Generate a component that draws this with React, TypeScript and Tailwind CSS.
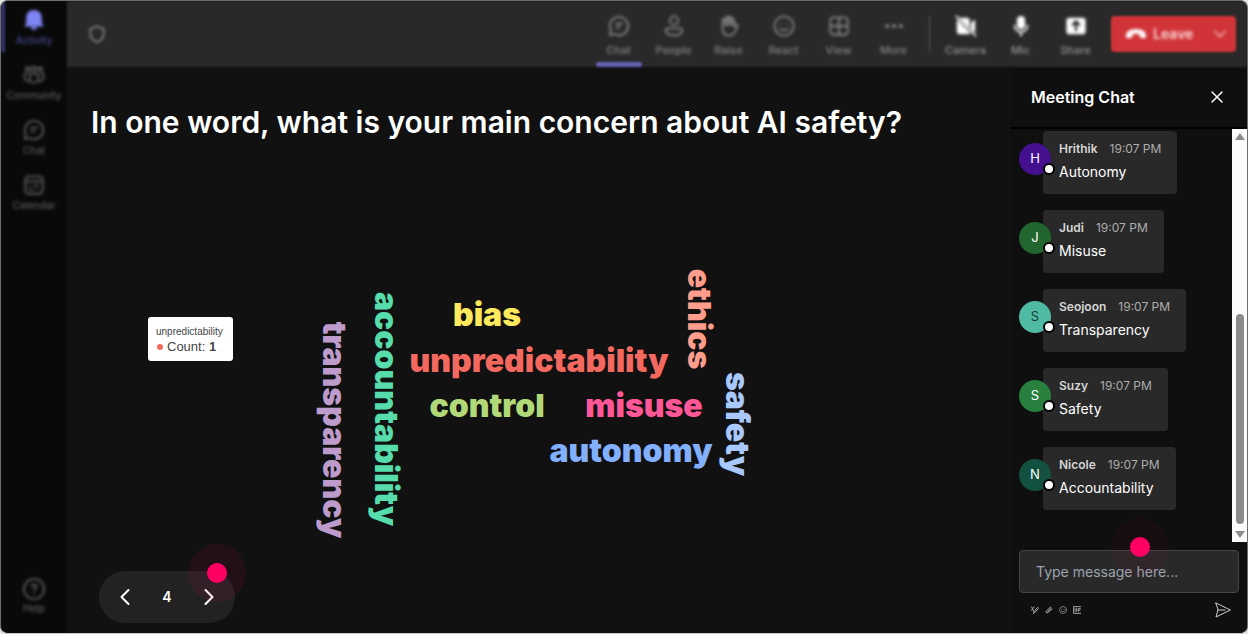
import type { ReactNode } from "react";
import clsx from "clsx";
import { ChevronLeft, ChevronRight, ChevronDown, X } from "lucide-react";

type IconProps = { className?: string };

function Svg({ className, children }: IconProps & { children: ReactNode }) {
  return (
    <svg
      viewBox="0 0 24 24"
      className={className}
      fill="none"
      stroke="currentColor"
      strokeWidth="2"
      strokeLinecap="round"
      strokeLinejoin="round"
      aria-hidden="true"
    >
      {children}
    </svg>
  );
}

const BellIcon = (props: IconProps) => (
  <Svg {...props}>
    <path d="M12 1c-5 0-8.500 3.500-8.500 8.500V15L1.500 19h21l-2-4V9.500C20.500 4.500 17 1 12 1Z" fill="currentColor" stroke="none" />
    <path d="M8.500 19.500h7c-.4 2-1.800 3.200-3.500 3.200s-3.100-1.200-3.500-3.200Z" fill="currentColor" stroke="none" />
  </Svg>
);

const CommunityIcon = (props: IconProps) => (
  <Svg {...props}>
    <circle cx="5" cy="5.500" r="2" />
    <circle cx="12" cy="5" r="2.500" />
    <circle cx="19" cy="5.500" r="2" />
    <path d="M7.500 10.500h9V16a4.500 4.500 0 0 1-9 0ZM4.500 10.500H1.800V15c0 2.500 2 4 4.200 3.800M19.500 10.500h2.700V15c0 2.500-2 4-4.200 3.800" />
  </Svg>
);

const ChatIcon = (props: IconProps) => (
  <Svg {...props}>
    <path d="M12 2a10 10 0 1 1-4.700 18.800L2 22l1.200-5.300A10 10 0 0 1 12 2Z" />
    <path d="M9 9.500h6.500M9 13.500h3.500" />
  </Svg>
);

const CalendarIcon = (props: IconProps) => (
  <Svg {...props}>
    <rect x="2.500" y="2.500" width="19" height="19" rx="3.500" />
    <path d="M3 8h18M7 13h.1M12 12.500h4M7 17h4M16 16.500h.1" />
  </Svg>
);

const HelpIcon = (props: IconProps) => (
  <Svg {...props}>
    <circle cx="12" cy="12" r="11" />
    <path d="M9.500 9.500c0-3.500 5.300-3 5.300 0 0 2-2.800 2-2.800 4.500M12 17.300v.1" />
  </Svg>
);

const ShieldIcon = (props: IconProps) => (
  <Svg {...props}>
    <path d="M12 2.500c2.500 2 5 2.800 8 3V12c0 4.500-3 7.800-8 9.800-5-2-8-5.300-8-9.800V5.500c3-.2 5.500-1 8-3Z" />
  </Svg>
);

const PeopleIcon = (props: IconProps) => (
  <Svg {...props}>
    <circle cx="12" cy="6" r="4.500" />
    <path d="M5.500 14.500h13a2.500 2.500 0 0 1 2.500 2.500c0 3.500-4 5.300-9 5.300S3 20.500 3 17a2.500 2.500 0 0 1 2.500-2.500Z" />
  </Svg>
);

const HandIcon = (props: IconProps) => (
  <Svg {...props}>
    <path d="M5 12V6a1.600 1.600 0 0 1 3.200 0V3.800a1.600 1.600 0 0 1 3.200 0v-.6a1.600 1.600 0 0 1 3.200 0V5a1.600 1.600 0 0 1 3 0v7.500l1-1.500c1-1.300 3.200-.5 2.700 1.200-1.600 4.500-3.800 10.300-9 10.300C7.500 22.500 5 19.500 5 15Z" />
    <path d="M8.200 5v6M11.400 4v7M14.600 5v6" strokeWidth="2.500" />
  </Svg>
);

const SmileIcon = (props: IconProps) => (
  <Svg {...props}>
    <circle cx="12" cy="12" r="10.500" />
    <path d="M8.500 9.500v.1M15.500 9.500v.1M7.500 15c2 2.600 7 2.600 9 0" />
  </Svg>
);

const ViewIcon = (props: IconProps) => (
  <Svg {...props}>
    <rect x="2.500" y="2.500" width="19" height="19" rx="3.500" />
    <path d="M12 3v18M3 12h18" />
  </Svg>
);

const MoreIcon = (props: IconProps) => (
  <Svg {...props}>
    <path d="M4.500 12h.1M12 12h.1M19.500 12h.1" strokeWidth="4.500" />
  </Svg>
);

const CameraOffIcon = (props: IconProps) => (
  <Svg {...props}>
    <path d="M5 3h8a3 3 0 0 1 3 3v8.500L5 3ZM2 4.500 17 19.800c-.7.800-1.600 1.200-2.700 1.200H5a3 3 0 0 1-3-3ZM17.500 8.500 22 5v14l-4.500-3.500Z" fill="currentColor" stroke="none" />
    <path d="m1.500 1.500 21 21" />
  </Svg>
);

const MicIcon = (props: IconProps) => (
  <Svg {...props}>
    <rect x="7.500" y="1" width="9" height="14.500" rx="4.500" fill="currentColor" stroke="none" />
    <path d="M5 11.500a7 7 0 0 0 14 0M12 18.500v4" />
  </Svg>
);

const ShareIcon = (props: IconProps) => (
  <Svg {...props}>
    <rect x="1.500" y="3" width="21" height="18" rx="3" fill="currentColor" stroke="none" />
    <path d="M12 16.500v-9M8.500 10.500 12 7l3.500 3.500" stroke="#292929" strokeWidth="2.500" />
  </Svg>
);

const HangUpIcon = (props: IconProps) => (
  <Svg {...props}>
    <path d="M12 6.500c6.500 0 11 3 11 7.300 0 1.800-.8 3.200-2.500 2.900l-3-.6c-1-.2-1.600-.9-1.700-1.900l-.2-2c-2.300-.7-4.900-.7-7.200 0l-.2 2c-.1 1-.7 1.700-1.700 1.900l-3 .6C1.800 17 1 15.600 1 13.800c0-4.300 4.500-7.300 11-7.300Z" fill="currentColor" stroke="none" />
  </Svg>
);

const SendIcon = (props: IconProps) => (
  <Svg {...props}>
    <path d="M1.500 1.500 23 12 1.500 22.500 4.500 12ZM4.500 12H15" strokeWidth="1.500" />
  </Svg>
);

const FormatIcon = (props: IconProps) => (
  <Svg {...props}>
    <path d="M2 3l6 13M1 13l8-10M8 22l1-5L20 4l3 3-12 13Z" strokeWidth="3" />
  </Svg>
);

const ClipIcon = (props: IconProps) => (
  <Svg {...props}>
    <path d="m8 17 10-10c2-2-1-4.500-3-2.500L4 15c-3 3.500 1 7.500 4.500 4.500L21 9" strokeWidth="3" />
  </Svg>
);

const GifIcon = (props: IconProps) => (
  <Svg {...props}>
    <path d="M23 2H1v20h22M6 8v8M11 8v8M16 16V8h6M16 12h5" strokeWidth="3" />
  </Svg>
);

const sideItems = [
  { label: "Activity", icon: BellIcon, active: true },
  { label: "Community", icon: CommunityIcon },
  { label: "Chat", icon: ChatIcon },
  { label: "Calendar", icon: CalendarIcon },
];

const toolbarItems = [
  { label: "Chat", icon: ChatIcon, active: true },
  { label: "People", icon: PeopleIcon },
  { label: "Raise", icon: HandIcon },
  { label: "React", icon: SmileIcon },
  { label: "View", icon: ViewIcon },
  { label: "More", icon: MoreIcon },
];

const deviceItems = [
  { label: "Camera", icon: CameraOffIcon },
  { label: "Mic", icon: MicIcon },
  { label: "Share", icon: ShareIcon },
];

// x / y is the middle of the word's baseline
const words = [
  { text: "bias", x: 420, y: 183, fill: "#ffe95c" },
  { text: "unpredictability", x: 472, y: 229, fill: "#f4695f" },
  { text: "control", x: 420, y: 274, fill: "#b2d977" },
  { text: "misuse", x: 577, y: 274, fill: "#ff5797" },
  { text: "autonomy", x: 564, y: 319, fill: "#82b0ff" },
  { text: "transparency", x: 256, y: 287, fill: "#bd9bcb", vertical: true },
  { text: "accountability", x: 308, y: 266, fill: "#57dcab", vertical: true },
  { text: "ethics", x: 621, y: 176, fill: "#ff9d8c", vertical: true },
  { text: "safety", x: 659, y: 281, fill: "#a9c8fb", vertical: true },
];

const messages = [
  { name: "Hrithik", text: "Autonomy", avatar: "bg-[#44108f] text-white" },
  { name: "Judi", text: "Misuse", avatar: "bg-[#22652f] text-white" },
  { name: "Seojoon", text: "Transparency", avatar: "bg-[#4fbba4] text-[#1c3b35]" },
  { name: "Suzy", text: "Safety", avatar: "bg-[#28803f] text-white" },
  { name: "Nicole", text: "Accountability", avatar: "bg-[#12513f] text-white" },
];

function Hotspot({ className, halo }: { className: string; halo: string }) {
  return (
    <span className={clsx("pointer-events-none absolute flex size-[58px] items-center justify-center rounded-full", halo, className)}>
      <span className="size-5 rounded-full bg-[#ff0062]" />
    </span>
  );
}

function Sidebar() {
  return (
    <nav className="flex w-[66px] shrink-0 flex-col bg-[#090909] text-[#5c5c5c] blur-[1px]">
      {sideItems.map(({ label, icon: Icon, active }) => (
        <button key={label} className="relative h-[55px] w-full">
          {active && <span className="absolute top-0 left-0 h-[51px] w-1 bg-[#35356b]" />}
          <span className="flex flex-col items-center gap-px blur-[1px]">
            <Icon className={clsx("size-[22px]", active && "text-[#7f85f5]")} />
            <span className={clsx("text-[10px] leading-4 font-medium", active && "text-[#474a92]")}>{label}</span>
          </span>
        </button>
      ))}
      <button className="mt-auto flex flex-col items-center pb-[17px] blur-[1px]">
        <HelpIcon className="size-[22px]" />
        <span className="text-[10px] leading-4 font-medium">Help</span>
      </button>
    </nav>
  );
}

function Toolbar() {
  return (
    <header className="flex h-[66px] shrink-0 items-center bg-[#292929] pr-[11px] pl-5 blur-[1px]">
      <ShieldIcon className="size-5 text-[#8a8a8a] blur-[1px]" />
      <div className="ml-auto flex h-full items-stretch text-[#858585]">
        {toolbarItems.map(({ label, icon: Icon, active }) => (
          <button key={label} className="relative flex w-[55px] flex-col items-center gap-[5px] pt-3.5">
            <Icon className="size-[22px] blur-[1px]" />
            <span className="text-[11px] leading-4 font-medium blur-[1px]">{label}</span>
            {active && <span className="absolute bottom-0 h-[5px] w-[46px] rounded-sm bg-[#6163b0]" />}
          </button>
        ))}
      </div>
      <div className="mx-2 h-9 w-px bg-[#555555]" />
      <div className="flex h-full items-stretch">
        {deviceItems.map(({ label, icon: Icon }) => (
          <button key={label} className="flex w-[55px] flex-col items-center gap-[5px] pt-3.5 text-[#969696]">
            <Icon className="size-[22px] text-white blur-[1px]" />
            <span className="text-[11px] leading-4 font-medium blur-[1px]">{label}</span>
          </button>
        ))}
      </div>
      <button className="ml-2 flex h-9 w-[125px] items-center rounded-sm bg-[#d13438] pl-3.5">
        <HangUpIcon className="size-[22px] text-white blur-[1px]" />
        <span className="ml-1.5 text-sm font-semibold text-[#fbdada] blur-[1px]">Leave</span>
        <ChevronDown className="mr-1.5 ml-auto size-5 text-[#f7b9ba] blur-[1px]" />
      </button>
    </header>
  );
}

function WordCloud() {
  return (
    <div className="relative min-h-0 flex-1">
      <svg className="size-full overflow-visible font-['Inter',sans-serif] text-[32px] font-black" role="img" aria-label="Word cloud of answers">
        {words.map(({ text, x, y, fill, vertical }) => (
          <text key={text} fill={fill} textAnchor="middle" transform={`translate(${x} ${y})${vertical ? " rotate(90)" : ""}`}>
            {text}
          </text>
        ))}
      </svg>
      <div className="absolute top-[174px] left-[81px] rounded-[3px] bg-white py-[7px] pr-2.5 pl-2 font-['Liberation_Sans',Arial,sans-serif] text-[#444444]">
        <p className="text-[10px] leading-4">unpredictability</p>
        <p className="flex items-center text-[13px] leading-[14px]">
          <span className="mr-1 ml-px size-1.5 rounded-full bg-[#f4695f]" />
          Count:&nbsp;<b>1</b>
        </p>
      </div>
    </div>
  );
}

function Pager() {
  return (
    <div className="relative mb-2.5 ml-8 flex h-[52px] w-[136px] items-center justify-between rounded-full bg-[#222222] px-3 text-white">
      <button aria-label="Previous question">
        <ChevronLeft className="size-7" strokeWidth={1.75} />
      </button>
      <span className="text-sm font-semibold">4</span>
      <button aria-label="Next question">
        <ChevronRight className="size-7" strokeWidth={1.75} />
      </button>
      <Hotspot className="-top-[27px] left-[89px]" halo="bg-[#ff0062]/8" />
    </div>
  );
}

function MeetingChat() {
  return (
    <aside className="flex w-[236px] shrink-0 flex-col bg-[#0f0f0f]">
      <div className="flex h-[62px] shrink-0 items-center justify-between border-b-2 border-black px-5">
        <h2 className="text-base font-semibold text-white">Meeting Chat</h2>
        <button aria-label="Close chat">
          <X className="size-5 text-white" strokeWidth={1.75} />
        </button>
      </div>

      <div className="flex min-h-0 flex-1">
        <ul className="flex min-w-0 flex-1 flex-col gap-4 overflow-hidden pt-0.5 pl-2">
          {messages.map(({ name, text, avatar }) => (
            <li key={name} className="flex shrink-0 items-start">
              <div className={clsx("relative z-10 mt-3 -mr-2 flex size-8 shrink-0 items-center justify-center rounded-full text-[13px]", avatar)}>
                {name[0]}
                <span className="absolute -right-1 bottom-0 size-3 rounded-full border-2 border-black bg-white" />
              </div>
              <div className="h-[63px] rounded-sm bg-[#292929] px-4 pt-2">
                <p className="flex gap-3 text-xs leading-5">
                  <span className="font-semibold text-[#d6d6d6]">{name}</span>
                  <time className="text-[#adadad]">19:07 PM</time>
                </p>
                <p className="text-sm leading-[26px] text-white">{text}</p>
              </div>
            </li>
          ))}
        </ul>
        {/* Scrollbar */}
        <div className="flex w-[15px] shrink-0 flex-col items-center bg-[#fcfcfc] py-1" aria-hidden="true">
          <svg viewBox="0 0 10 8" className="h-2 w-2.5 shrink-0 fill-[#8b8b8b]"><path d="M5 0 10 7H0Z" /></svg>
          <div className="mt-auto mb-1.5 h-[210px] w-2 rounded-full bg-[#8b8b8b]" />
          <svg viewBox="0 0 10 8" className="h-2 w-2.5 shrink-0 fill-[#8b8b8b]"><path d="M5 8 0 1h10Z" /></svg>
        </div>
      </div>

      <div className="relative shrink-0 px-2 pt-2">
        <input
          type="text"
          aria-label="Message"
          placeholder="Type message here..."
          className="block h-[43px] w-full rounded-sm border border-[#454545] bg-[#292929] px-4 text-sm text-white placeholder:text-[#9ca3af]"
        />
        <div className="flex h-10 items-center gap-1.5 px-3 pb-1.5 text-[#a8a8a8]">
          <button aria-label="Format"><FormatIcon className="size-2" /></button>
          <button aria-label="Attach"><ClipIcon className="size-2" /></button>
          <button aria-label="Emoji"><SmileIcon className="size-2" /></button>
          <button aria-label="GIF"><GifIcon className="size-2" /></button>
          <button aria-label="Send" className="-mr-1 ml-auto"><SendIcon className="size-4 text-[#d0d0d0]" /></button>
        </div>
        <Hotspot className="-top-6 left-[100px]" halo="bg-[#ff0062]/4" />
      </div>
    </aside>
  );
}

export default function App() {
  return (
    <div className="h-screen bg-[#e4e4e4] font-['Inter',sans-serif]">
      <div className="flex h-full overflow-hidden rounded-lg border border-[#6e6e6e] border-b-[#c8c8c8] bg-[#111111]">
        <Sidebar />
        <div className="flex min-w-0 flex-1 flex-col">
          <Toolbar />
          <div className="flex min-h-0 flex-1">
            <main className="flex min-w-0 flex-1 flex-col bg-[#111111]">
              <h1 className="px-6 pt-[35px] pb-px text-3xl leading-10 font-semibold text-white">
                In one word, what is your main concern about AI safety?
              </h1>
              <WordCloud />
              <Pager />
            </main>
            <MeetingChat />
          </div>
        </div>
      </div>
    </div>
  );
}
